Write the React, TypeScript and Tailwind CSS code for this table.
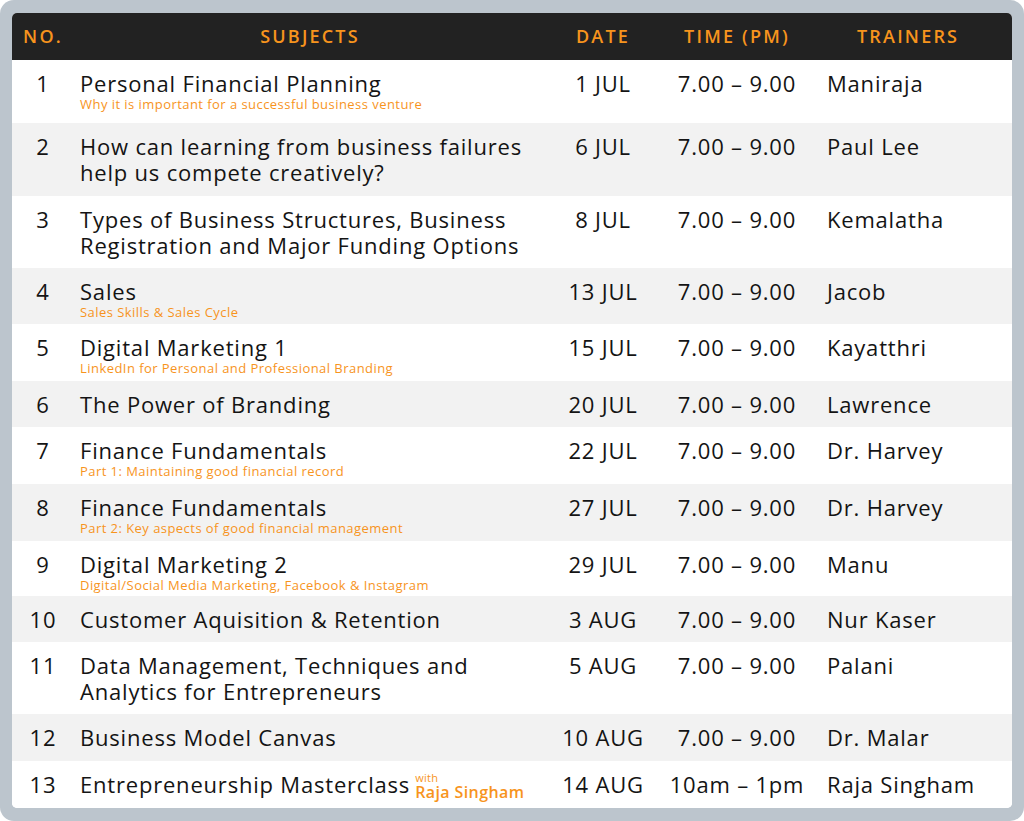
import React from 'react';

interface Session {
    no: number;
    title: string[];
    sub?: string;
    date: string;
    time: string;
    trainer: string;
    h: string;
}

const sessions: Session[] = [
    { no: 1, title: ['Personal Financial Planning'], sub: 'Why it is important for a successful business venture', date: '1 JUL', time: '7.00 – 9.00', trainer: 'Maniraja', h: 'h-[63px]' },
    { no: 2, title: ['How can learning from business failures', 'help us compete creatively?'], date: '6 JUL', time: '7.00 – 9.00', trainer: 'Paul Lee', h: 'h-[73px]' },
    { no: 3, title: ['Types of Business Structures, Business', 'Registration and Major Funding Options'], date: '8 JUL', time: '7.00 – 9.00', trainer: 'Kemalatha', h: 'h-[72px]' },
    { no: 4, title: ['Sales'], sub: 'Sales Skills & Sales Cycle', date: '13 JUL', time: '7.00 – 9.00', trainer: 'Jacob', h: 'h-[56px]' },
    { no: 5, title: ['Digital Marketing 1'], sub: 'LinkedIn for Personal and Professional Branding', date: '15 JUL', time: '7.00 – 9.00', trainer: 'Kayatthri', h: 'h-[57px]' },
    { no: 6, title: ['The Power of Branding'], date: '20 JUL', time: '7.00 – 9.00', trainer: 'Lawrence', h: 'h-[46px]' },
    { no: 7, title: ['Finance Fundamentals'], sub: 'Part 1: Maintaining good financial record', date: '22 JUL', time: '7.00 – 9.00', trainer: 'Dr. Harvey', h: 'h-[57px]' },
    { no: 8, title: ['Finance Fundamentals'], sub: 'Part 2: Key aspects of good financial management', date: '27 JUL', time: '7.00 – 9.00', trainer: 'Dr. Harvey', h: 'h-[57px]' },
    { no: 9, title: ['Digital Marketing 2'], sub: 'Digital/Social Media Marketing, Facebook & Instagram', date: '29 JUL', time: '7.00 – 9.00', trainer: 'Manu', h: 'h-[55px]' },
    { no: 10, title: ['Customer Aquisition & Retention'], date: '3 AUG', time: '7.00 – 9.00', trainer: 'Nur Kaser', h: 'h-[46px]' },
    { no: 11, title: ['Data Management, Techniques and', 'Analytics for Entrepreneurs'], date: '5 AUG', time: '7.00 – 9.00', trainer: 'Palani', h: 'h-[72px]' },
    { no: 12, title: ['Business Model Canvas'], date: '10 AUG', time: '7.00 – 9.00', trainer: 'Dr. Malar', h: 'h-[47px]' },
    { no: 13, title: ['Entrepreneurship Masterclass'], date: '14 AUG', time: '10am – 1pm', trainer: 'Raja Singham', h: 'h-[47px]' },
];

const cols = 'grid grid-cols-[62px_472px_114px_154px_198px]';

const App: React.FC = () => {
    return (
        <div className="w-[1024px] h-[821px] bg-white font-['Open_Sans',sans-serif]">
            <div className="w-[1024px] h-[821px] rounded-[14px] bg-[#bcc5cd] pl-[12px] pt-[13px]">
                <div className="w-[1000px] h-[795px] rounded-[5px] overflow-hidden bg-white">
                    {/* header */}
                    <div className={`${cols} h-[47px] bg-[#222222] items-center text-[#f7941d] text-[18px] font-semibold tracking-[2.2px]`}>
                        <div className="text-center">NO.</div>
                        <div className="text-center">SUBJECTS</div>
                        <div className="text-center">DATE</div>
                        <div className="text-center">TIME (PM)</div>
                        <div className="pl-[43px]">TRAINERS</div>
                    </div>

                    {sessions.map((s, i) => (
                        <div
                            key={s.no}
                            className={`${cols} ${s.h} ${i % 2 === 1 ? 'bg-[#f2f2f2]' : 'bg-white'} pt-[10px] text-[#141414] text-[22px] leading-[26px] tracking-[0.8px]`}
                        >
                            <div className="text-center">{s.no}</div>
                            <div className="pl-[6px]">
                                {s.no === 13 ? (
                                    <div className="flex items-end">
                                        <span>{s.title[0]}</span>
                                        <span className="ml-[5px] flex flex-col text-[#f7941d] mb-[-4px]">
                                            <span className="text-[11px] leading-[11px] tracking-[0.3px]">with</span>
                                            <span className="text-[16px] leading-[18px] font-semibold tracking-[0.4px]">Raja Singham</span>
                                        </span>
                                    </div>
                                ) : (
                                    s.title.map((t) => <div key={t}>{t}</div>)
                                )}
                                {s.sub && (
                                    <div className="text-[#f7941d] text-[13px] leading-[14px] tracking-[0.45px] mt-[1px]">{s.sub}</div>
                                )}
                            </div>
                            <div className="text-center">{s.date}</div>
                            <div className="text-center">{s.time}</div>
                            <div className="pl-[13px]">{s.trainer}</div>
                        </div>
                    ))}
                </div>
            </div>
        </div>
    );
};

export default App;
